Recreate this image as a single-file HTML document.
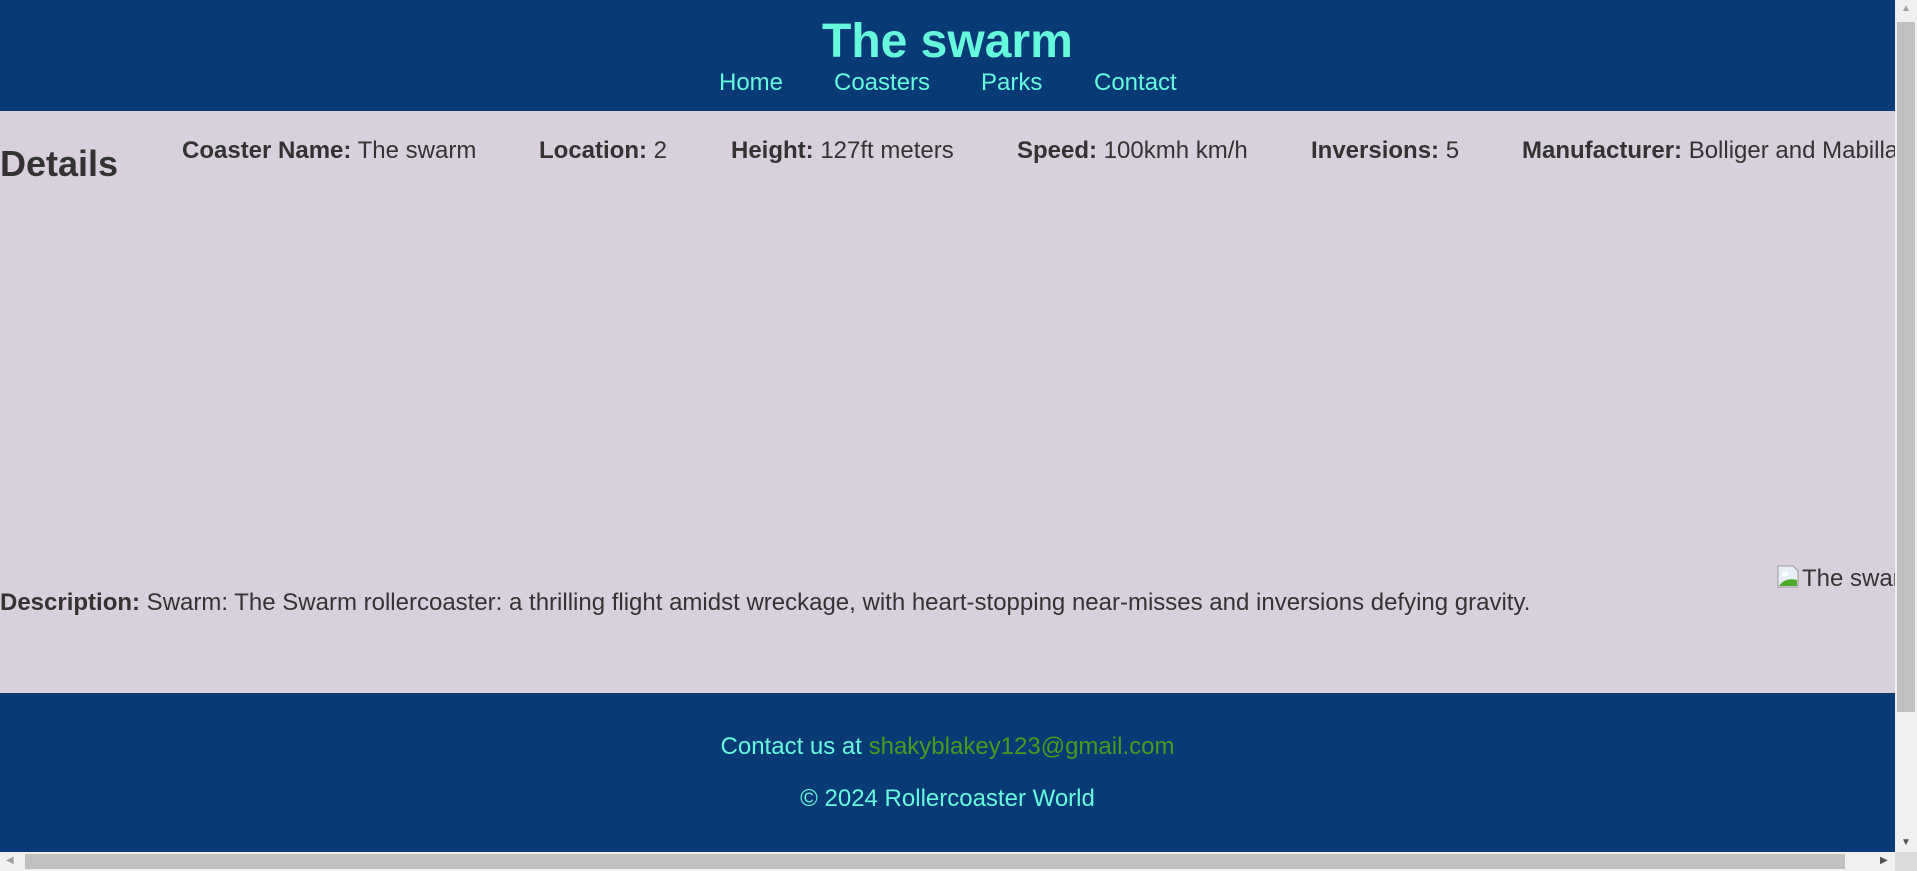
<!DOCTYPE html>
<html><head><meta charset="utf-8"><style>
html,body{margin:0;padding:0;width:1917px;height:871px;overflow:hidden;background:#d9d0de;font-family:"Liberation Sans",Arial,sans-serif;color:#333;}
.a{position:absolute;white-space:nowrap;line-height:1;}
#hdr{position:absolute;left:0;top:0;width:1895px;height:111px;background:#083b76;}
#ftr{position:absolute;left:0;top:693px;width:1895px;height:159px;background:#083b76;}
.aq{color:#66fadc;}
b{font-weight:bold;}
#vs{position:absolute;left:1895px;top:0;width:22px;height:852px;background:#f0f0f0;}
#vt{position:absolute;left:1897px;top:22px;width:18px;height:690px;background:#c1c1c1;}
#hs{position:absolute;left:0;top:852px;width:1895px;height:19px;background:#f0f0f0;}
#ht{position:absolute;left:25px;top:854px;width:1820px;height:15px;background:#c1c1c1;}
#cr{position:absolute;left:1895px;top:852px;width:22px;height:19px;background:#dcdcdc;}
</style></head><body>
<div id="hdr"></div>
<div class="a aq" style="left:822px;top:18px;font-size:48px;font-weight:bold;">The swarm</div>
<div class="a aq" style="left:719px;top:71px;font-size:24px;">Home</div>
<div class="a aq" style="left:834px;top:71px;font-size:24px;">Coasters</div>
<div class="a aq" style="left:981px;top:71px;font-size:24px;">Parks</div>
<div class="a aq" style="left:1094px;top:71px;font-size:24px;">Contact</div>

<div class="a" style="left:0;top:146px;font-size:36px;font-weight:bold;">Details</div>
<div class="a" style="left:182px;top:139px;font-size:24px;"><b>Coaster Name:</b> The swarm</div>
<div class="a" style="left:539px;top:139px;font-size:24px;"><b>Location:</b> 2</div>
<div class="a" style="left:731px;top:139px;font-size:24px;"><b>Height:</b> 127ft meters</div>
<div class="a" style="left:1017px;top:139px;font-size:24px;"><b>Speed:</b> 100kmh km/h</div>
<div class="a" style="left:1311px;top:139px;font-size:24px;"><b>Inversions:</b> 5</div>
<div style="position:absolute;left:1522px;top:139px;width:373px;overflow:hidden;" class="a"><span style="font-size:24px;"><b>Manufacturer:</b> Bolliger and Mabillard</span></div>

<div style="position:absolute;left:1777px;top:565px;width:118px;height:26px;overflow:hidden;" class="a">
<svg width="22" height="23" style="position:absolute;left:0;top:0"><path d="M1 1h15l5 5v16H1z" fill="#e8eef5" stroke="#999"/><path d="M2 21c4-6 10-8 18-6v6z" fill="#4caa2a"/><circle cx="8" cy="9" r="3" fill="#fff"/></svg>
<span style="position:absolute;left:25px;top:2px;font-size:24px;">The swarm</span></div>

<div class="a" style="left:0;top:591px;font-size:24px;"><b>Description:</b> Swarm: The Swarm rollercoaster: a thrilling flight amidst wreckage, with heart-stopping near-misses and inversions defying gravity.</div>

<div id="ftr"></div>
<div class="a aq" style="left:0;width:1895px;text-align:center;top:735px;font-size:24px;">Contact us at <span style="color:#4b9a1c">shakyblakey123@gmail.com</span></div>
<div class="a aq" style="left:0;width:1895px;text-align:center;top:787px;font-size:24px;">© 2024 Rollercoaster World</div>

<div id="vs"></div><div id="vt"></div>
<div class="a" style="left:1901px;top:4px;font-size:10px;color:#a0a0a0">▲</div>
<div class="a" style="left:1901px;top:838px;font-size:10px;color:#505050">▼</div>
<div id="hs"></div><div id="ht"></div><div id="cr"></div>
<div class="a" style="left:6px;top:856px;font-size:10px;color:#a0a0a0">◀</div>
<div class="a" style="left:1880px;top:856px;font-size:10px;color:#505050">▶</div>
</body></html>
